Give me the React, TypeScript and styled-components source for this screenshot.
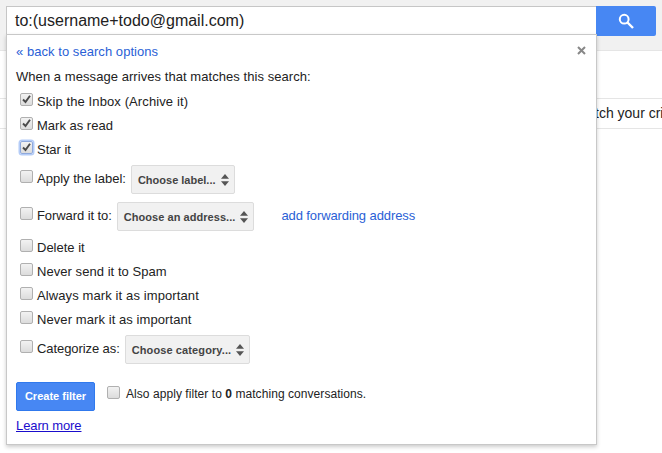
import styled, {createGlobalStyle} from 'styled-components';

const GlobalStyle = createGlobalStyle`
  html, body {
    margin: 0;
    padding: 0;
    background: #fff;
    overflow: hidden;
  }
  body {
    font-family: 'Liberation Sans', Arial, sans-serif;
    font-size: 13px;
    color: #222;
  }
`;

const Page = styled.div`
  position: relative;
  width: 662px;
  height: 453px;
  overflow: hidden;
`;

const TopBand = styled.div`
  box-sizing: border-box;
  height: 51px;
  padding: 6px 6px 0;
  background: #f1f1f1;
  border-bottom: 1px solid #e5e5e5;
  display: flex;
  align-items: flex-start;
`;

const SearchInput = styled.div`
  box-sizing: border-box;
  width: 590px;
  height: 29px;
  padding: 0 8px;
  background: #fff;
  border: 1px solid #c6c6c6;
  border-right: none;
  font-size: 16px;
  line-height: 27px;
  color: #222;
`;

const SearchButton = styled.div`
  box-sizing: border-box;
  width: 60px;
  height: 30px;
  background: #4787f3;
  border-radius: 0 2px 2px 0;
  display: flex;
  align-items: center;
  justify-content: center;
`;

const ResultRow = styled.div`
  box-sizing: border-box;
  height: 31px;
  margin-top: 47px;
  border-top: 1px solid #e5e5e5;
  border-bottom: 1px solid #e5e5e5;
  padding-left: 595px;
  font-size: 14px;
  line-height: 29px;
  white-space: nowrap;
`;

const FilterPanel = styled.div`
  position: absolute;
  left: 6px;
  top: 34px;
  box-sizing: border-box;
  width: 591px;
  height: 411px;
  padding: 9px 9px 0;
  background: #fff;
  border: 1px solid #c8c8c8;
  box-shadow: 0 2px 4px rgba(0, 0, 0, 0.2);
`;

const CloseIcon = styled.svg`
  position: absolute;
  top: 11px;
  right: 10px;
`;

const BackLink = styled.a`
  display: block;
  line-height: 15px;
  letter-spacing: 0.05px;
  color: #2a5fd6;
`;

const Intro = styled.div`
  margin-top: 10px;
  margin-bottom: 5px;
  line-height: 15px;
  letter-spacing: 0.06px;
`;

const Row = styled.div<{$tall?: boolean}>`
  display: flex;
  align-items: center;
  height: ${({$tall}) => ($tall ? '37px' : '24px')};
  padding-left: 4px;
  padding-bottom: ${({$tall}) => ($tall ? '3px' : '0')};
  box-sizing: border-box;
  white-space: nowrap;
`;

const RowLabel = styled.span<{$spacing?: number}>`
  margin-left: 4px;
  letter-spacing: ${({$spacing}) => $spacing ?? 0}px;
`;

const Box = styled.span<{$focused?: boolean}>`
  box-sizing: border-box;
  flex: none;
  position: relative;
  top: -2px;
  width: 13px;
  height: 13px;
  border: 1px solid ${({$focused}) => ($focused ? '#8fa9dc' : '#b0b0b0')};
  border-radius: 2px;
  background: linear-gradient(#f2f2f2, #dcdcdc);
  box-shadow: ${({$focused}) => ($focused ? '0 0 0 1.5px #b4ccf7' : 'none')};
  display: flex;
  align-items: center;
  justify-content: center;
`;

const Select = styled.div<{$spacing?: number}>`
  box-sizing: border-box;
  height: 29px;
  margin-left: 5px;
  margin-top: 3px;
  padding: 0 5px 0 6px;
  background: #f1f1f1;
  border: 1px solid #dcdcdc;
  border-radius: 2px;
  display: flex;
  align-items: center;
  gap: 5px;
  font-size: 11px;
  font-weight: bold;
  letter-spacing: ${({$spacing}) => $spacing ?? 0}px;
  color: #444;
`;

const AddForwarding = styled.a`
  margin-left: 27px;
  letter-spacing: -0.1px;
  color: #2a5fd6;
`;

const ActionRow = styled.div`
  display: flex;
  align-items: flex-start;
  margin-top: 14px;
`;

const CreateButton = styled.button`
  box-sizing: border-box;
  width: 79px;
  height: 29px;
  padding: 0 0 2px;
  background: #4787f3;
  border: 1px solid #3079ed;
  border-radius: 2px;
  color: #fff;
  font-family: inherit;
  font-size: 11px;
  font-weight: bold;
`;

const ApplyOption = styled.div`
  display: flex;
  align-items: center;
  height: 24px;
  margin-left: 12px;
  font-size: 12px;
  letter-spacing: 0.06px;
`;

const ApplyLabel = styled.span`
  margin-left: 6px;
`;

const LearnMore = styled.a`
  display: block;
  margin-top: 7px;
  line-height: 15px;
  letter-spacing: -0.1px;
  color: #1a0dcc;
  text-decoration: underline;
`;

const Tick = () => (
  <svg width='9' height='9' viewBox='0 0 9 9'>
    <path d='M1 4.5 L3.5 7 L8 0.8' fill='none' stroke='#4a4a4a' strokeWidth='1.9' />
  </svg>
);

const Arrows = () => (
  <svg width='8' height='12' viewBox='0 0 8 12'>
    <path d='M4 0 L8 4.7 H0 Z M0 7.3 H8 L4 12 Z' fill='#555' />
  </svg>
);

type CheckRowProps = {label: string; checked?: boolean; focused?: boolean; spacing?: number};

const CheckRow = ({label, checked, focused, spacing}: CheckRowProps) => (
  <Row>
    <Box $focused={focused}>{checked && <Tick />}</Box>
    <RowLabel $spacing={spacing}>{label}</RowLabel>
  </Row>
);

const App = () => {
  return (
    <Page>
      <GlobalStyle />
      <TopBand>
        <SearchInput>to:(username+todo@gmail.com)</SearchInput>
        <SearchButton>
          <svg width='16' height='16' viewBox='0 0 16 16'>
            <circle cx='6.2' cy='6.2' r='4.4' fill='none' stroke='#fff' strokeWidth='2' />
            <path d='M9.5 9.5 L15 15' stroke='#fff' strokeWidth='2.4' />
          </svg>
        </SearchButton>
      </TopBand>
      <ResultRow>tch your cri</ResultRow>

      <FilterPanel>
        <CloseIcon width='9' height='9' viewBox='0 0 9 9'>
          <path d='M1 1 L8 8 M8 1 L1 8' stroke='#888' strokeWidth='2' />
        </CloseIcon>
        <BackLink>« back to search options</BackLink>
        <Intro>When a message arrives that matches this search:</Intro>
        <CheckRow label='Skip the Inbox (Archive it)' checked spacing={0.11} />
        <CheckRow label='Mark as read' checked />
        <CheckRow label='Star it' checked focused />
        <Row $tall>
          <Box />
          <RowLabel>Apply the label:</RowLabel>
          <Select>
            Choose label...
            <Arrows />
          </Select>
        </Row>
        <Row $tall>
          <Box />
          <RowLabel $spacing={-0.08}>Forward it to:</RowLabel>
          <Select $spacing={0.05}>
            Choose an address...
            <Arrows />
          </Select>
          <AddForwarding>add forwarding address</AddForwarding>
        </Row>
        <CheckRow label='Delete it' />
        <CheckRow label='Never send it to Spam' spacing={0.05} />
        <CheckRow label='Always mark it as important' spacing={0.11} />
        <CheckRow label='Never mark it as important' spacing={0.08} />
        <Row $tall>
          <Box />
          <RowLabel $spacing={-0.08}>Categorize as:</RowLabel>
          <Select $spacing={0.11}>
            Choose category...
            <Arrows />
          </Select>
        </Row>
        <ActionRow>
          <CreateButton>Create filter</CreateButton>
          <ApplyOption>
            <Box />
            <ApplyLabel>
              Also apply filter to <b>0</b> matching conversations.
            </ApplyLabel>
          </ApplyOption>
        </ActionRow>
        <LearnMore>Learn more</LearnMore>
      </FilterPanel>
    </Page>
  );
};

export default App;
